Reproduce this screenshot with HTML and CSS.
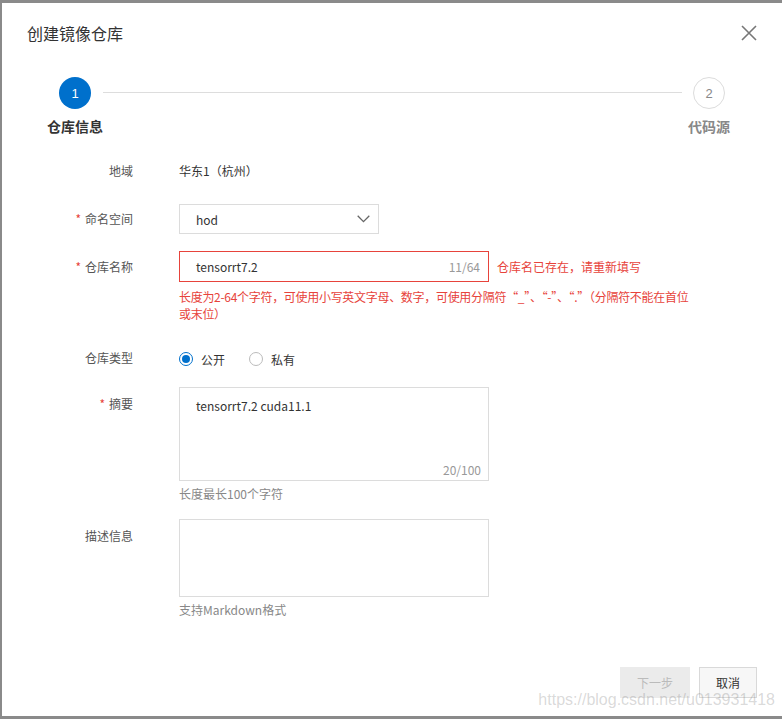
FILE: index.html
```html
<!DOCTYPE html>
<html lang="zh-CN">
<head>
<meta charset="utf-8">
<title>创建镜像仓库</title>
<link rel="stylesheet" href="styles.css">
</head>
<body>
<div class="dialog">
  <div class="header">
    <span class="title">创建镜像仓库</span>
    <svg class="close" width="16" height="16" viewBox="0 0 16 16"><path d="M1 1L15 15M15 1L1 15" stroke="#777" stroke-width="1.6" fill="none"/></svg>
  </div>

  <div class="steps">
    <div class="step step-active">
      <div class="step-num">1</div>
      <div class="step-label">仓库信息</div>
    </div>
    <div class="step-line"></div>
    <div class="step step-wait">
      <div class="step-num">2</div>
      <div class="step-label">代码源</div>
    </div>
  </div>

  <div class="form">
    <div class="row row-region">
      <div class="label">地域</div>
      <div class="control"><span class="value">华东1（杭州）</span></div>
    </div>

    <div class="row row-ns">
      <div class="label"><span class="req">*</span>命名空间</div>
      <div class="control">
        <div class="select">
          <span>hod</span>
          <svg width="13" height="8" viewBox="0 0 13 8"><path d="M0.7 0.8L6.5 6.6L12.3 0.8" stroke="#666" stroke-width="1.3" fill="none"/></svg>
        </div>
      </div>
    </div>

    <div class="row row-name">
      <div class="label"><span class="req">*</span>仓库名称</div>
      <div class="control">
        <div class="input-line">
          <div class="input input-error">
            <span>tensorrt7.2</span>
            <span class="count">11/64</span>
          </div>
          <span class="err-inline">仓库名已存在，请重新填写</span>
        </div>
        <div class="help help-error">长度为2-64个字符，可使用小写英文字母、数字，可使用分隔符“_”、“-”、“.”（分隔符不能在首位<br>或末位）</div>
      </div>
    </div>

    <div class="row row-type">
      <div class="label">仓库类型</div>
      <div class="control radios">
        <label class="radio"><span class="radio-dot checked"></span>公开</label>
        <label class="radio"><span class="radio-dot"></span>私有</label>
      </div>
    </div>

    <div class="row row-summary">
      <div class="label label-top"><span class="req">*</span>摘要</div>
      <div class="control">
        <div class="textarea textarea-summary">
          tensorrt7.2 cuda11.1
          <span class="ta-count">20/100</span>
        </div>
        <div class="help">长度最长100个字符</div>
      </div>
    </div>

    <div class="row row-desc">
      <div class="label label-top">描述信息</div>
      <div class="control">
        <div class="textarea textarea-desc"></div>
        <div class="help">支持Markdown格式</div>
      </div>
    </div>
  </div>

  <div class="footer">
    <button class="btn btn-disabled">下一步</button>
    <button class="btn btn-default">取消</button>
  </div>

  <div class="watermark">https://blog.csdn.net/u013931418</div>
</div>
</body>
</html>
```
FILE: styles.css
```css
html, body {
  margin: 0;
  padding: 0;
}
body {
  background: #8a8a8a;
  width: 782px;
  height: 719px;
  overflow: hidden;
  font-family: "Noto Sans CJK SC", "Noto Sans", sans-serif;
  font-size: 12px;
  color: #333;
}
.dialog {
  position: relative;
  margin: 3px 0 0 2px;
  height: 713px;
  background: #fff;
  display: flex;
  flex-direction: column;
  box-sizing: border-box;
}
.header {
  height: 60px;
  display: flex;
  align-items: center;
  justify-content: space-between;
  padding: 0 25px 0 25px;
}
.title {
  font-size: 16px;
  color: #333;
}
.close {
  display: block;
}

/* steps */
.steps {
  display: flex;
  align-items: flex-start;
  padding: 14px 52px 0 45px;
}
.step {
  display: flex;
  flex-direction: column;
  align-items: center;
}
.step-num {
  width: 32px;
  height: 32px;
  border-radius: 50%;
  box-sizing: border-box;
  display: flex;
  align-items: center;
  justify-content: center;
  font-family: "Liberation Sans", sans-serif;
  font-size: 13px;
}
.step-label {
  margin-top: 7px;
  line-height: 20px;
  font-size: 14px;
  font-weight: bold;
  white-space: nowrap;
}
.step-active .step-num {
  background: #0070cc;
  color: #fff;
}
.step-active .step-label {
  color: #333;
}
.step-wait .step-num {
  border: 1px solid #dcdcdc;
  color: #888;
  background: #fff;
}
.step-wait .step-label {
  color: #888;
}
.step-line {
  flex: 1;
  height: 1px;
  background: #dddddd;
  margin: 15px 6px 0 0;
}

/* form */
.form {
  margin-top: 20px;
}
.row {
  display: grid;
  grid-template-columns: 131px 310px;
  column-gap: 46px;
  align-items: start;
}
.label {
  text-align: right;
  color: #555;
  line-height: 30px;
  white-space: nowrap;
}
.label-top {
  padding-top: 2px;
}
.req {
  color: #e7433b;
  margin-right: 4px;
}
.value {
  line-height: 30px;
  color: #333;
}
.row-ns { margin-top: 18px; }
.row-name { margin-top: 17px; }
.row-type { margin-top: 21px; }
.row-summary { margin-top: 14px; }
.row-desc { margin-top: 16px; }

.row-name .label { line-height: 31px; }

.select {
  width: 200px;
  height: 30px;
  box-sizing: border-box;
  border: 1px solid #dcdcdc;
  display: flex;
  align-items: center;
  justify-content: space-between;
  padding: 0 8px 0 16px;
  color: #333;
}
.select svg { display: block; }

.input-line {
  display: flex;
  align-items: center;
  white-space: nowrap;
}
.input {
  width: 310px;
  flex: none;
  height: 31px;
  box-sizing: border-box;
  border: 1px solid #dcdcdc;
  display: flex;
  align-items: center;
  justify-content: space-between;
  padding: 0 8px 0 16px;
  color: #333;
}
.input-error {
  border-color: #e7433b;
}
.count {
  color: #999;
}
.err-inline {
  color: #e7433b;
  margin-left: 8px;
}
.help {
  margin-top: 4px;
  line-height: 18px;
  color: #888;
  white-space: nowrap;
}
.help-error {
  margin-top: 6px;
  line-height: 17px;
  color: #e7433b;
  letter-spacing: -0.3px;
}

.radios {
  display: flex;
  align-items: center;
  height: 30px;
  gap: 24px;
}
.radio {
  display: flex;
  align-items: center;
  gap: 8px;
  color: #333;
  margin-top: 2px;
}
.radio-dot {
  width: 14px;
  height: 14px;
  box-sizing: border-box;
  border-radius: 50%;
  border: 1px solid #bbb;
  display: flex;
  align-items: center;
  justify-content: center;
}
.radio-dot.checked {
  border-color: #0070cc;
}
.radio-dot.checked::after {
  content: "";
  width: 8px;
  height: 8px;
  border-radius: 50%;
  background: #0070cc;
}

.textarea {
  position: relative;
  width: 310px;
  box-sizing: border-box;
  border: 1px solid #dcdcdc;
  padding: 9px 16px;
  line-height: 18px;
  color: #333;
}
.textarea-summary { height: 94px; }
.textarea-desc { height: 78px; }
.ta-count {
  position: absolute;
  right: 7px;
  bottom: 1px;
  color: #999;
  line-height: 18px;
}

/* footer */
.footer {
  margin-top: auto;
  display: flex;
  justify-content: flex-end;
  gap: 9px;
  padding: 0 25px 18px 0;
}
.btn {
  height: 31px;
  box-sizing: border-box;
  font-family: "Noto Sans CJK SC", "Noto Sans", sans-serif;
  font-size: 12px;
  padding: 0;
  cursor: pointer;
}
.btn-disabled {
  width: 70px;
  background: #ebebeb;
  border: 1px solid #ebebeb;
  color: #bbb;
}
.btn-default {
  width: 58px;
  background: #f7f7f7;
  border: 1px solid #d9d9d9;
  color: #333;
}

.watermark {
  position: absolute;
  right: 7px;
  bottom: 7px;
  font-family: "Liberation Sans", sans-serif;
  font-size: 16px;
  line-height: 18px;
  color: rgba(128, 128, 128, 0.3);
  pointer-events: none;
}
```
